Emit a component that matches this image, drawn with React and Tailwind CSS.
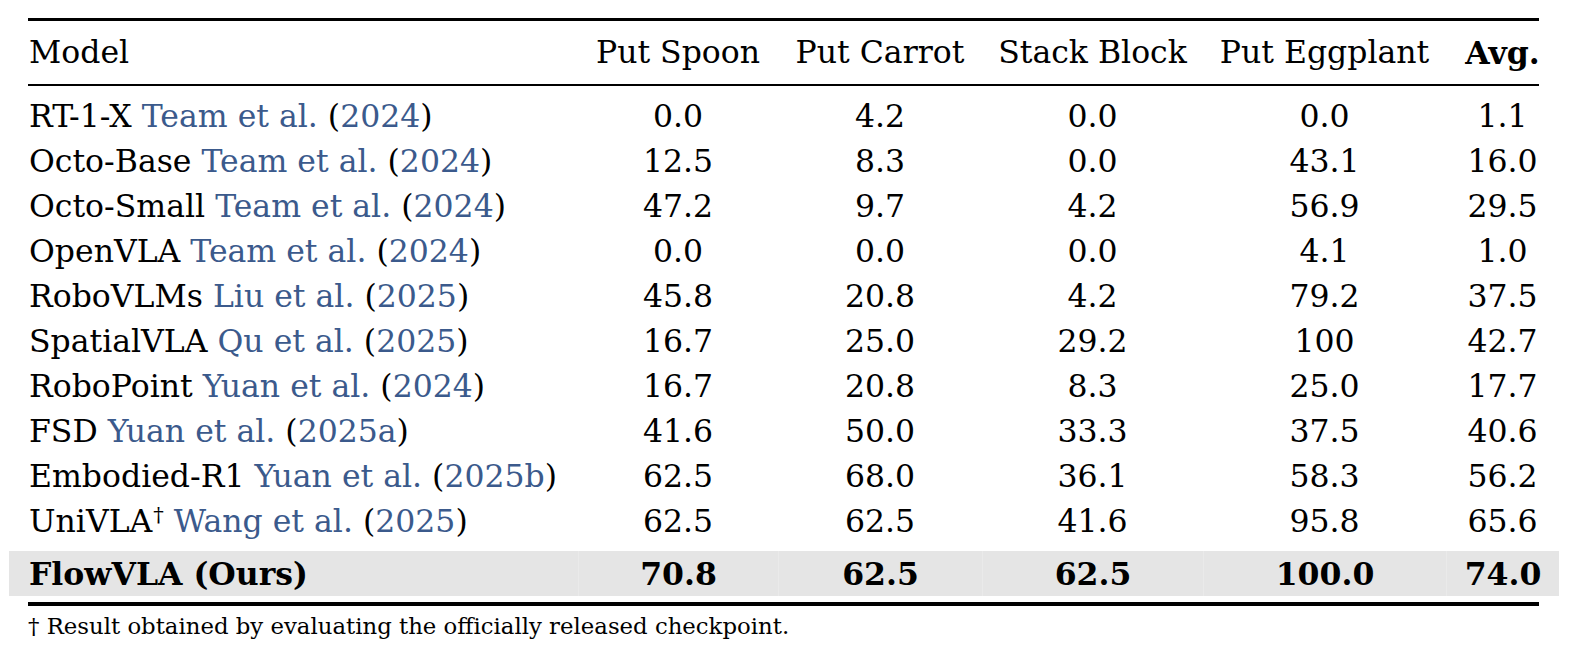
const rows = [
  ["RT-1-X", "Team et al.", "2024", ["0.0", "4.2", "0.0", "0.0", "1.1"]],
  ["Octo-Base", "Team et al.", "2024", ["12.5", "8.3", "0.0", "43.1", "16.0"]],
  ["Octo-Small", "Team et al.", "2024", ["47.2", "9.7", "4.2", "56.9", "29.5"]],
  ["OpenVLA", "Team et al.", "2024", ["0.0", "0.0", "0.0", "4.1", "1.0"]],
  ["RoboVLMs", "Liu et al.", "2025", ["45.8", "20.8", "4.2", "79.2", "37.5"]],
  ["SpatialVLA", "Qu et al.", "2025", ["16.7", "25.0", "29.2", "100", "42.7"]],
  ["RoboPoint", "Yuan et al.", "2024", ["16.7", "20.8", "8.3", "25.0", "17.7"]],
  ["FSD", "Yuan et al.", "2025a", ["41.6", "50.0", "33.3", "37.5", "40.6"]],
  ["Embodied-R1", "Yuan et al.", "2025b", ["62.5", "68.0", "36.1", "58.3", "56.2"]],
  ["UniVLA", "Wang et al.", "2025", ["62.5", "62.5", "41.6", "95.8", "65.6"], true],
];

const grid = "grid grid-cols-[569px_200px_204px_221px_243px_113px]";
const cite = "text-[#3b5a8c]";

export default function App() {
  return (
    <div className="w-[1580px] h-[660px] bg-white text-black font-['DejaVu_Serif',serif] pt-[18px]">
      <div className="ml-[9px] w-[1550px]">
        <div className="ml-[19px] mr-[20px] h-[3px] bg-black" />
        <div className={`${grid} h-[63px] items-center text-[31.5px] leading-[45px]`}>
          <div className="pl-[20px]">Model</div>
          <div className="text-center">Put Spoon</div>
          <div className="text-center">Put Carrot</div>
          <div className="text-center">Stack Block</div>
          <div className="text-center">Put Eggplant</div>
          <div className="text-center font-bold">Avg.</div>
        </div>
        <div className="ml-[19px] mr-[20px] h-[2px] bg-black" />

        <div className="pt-[8px] text-[31.5px] leading-[45px]">
          {rows.map(([name, who, year, vals, dagger]) => (
            <div key={name} className={`${grid} h-[45px]`}>
              <div className="pl-[20px] whitespace-nowrap">
                {name}
                {dagger && <sup className="text-[21px] leading-none ml-[1px]">†</sup>}{" "}
                <span className={cite}>{who}</span> (<span className={cite}>{year}</span>)
              </div>
              {vals.map((v, i) => (
                <div key={i} className="text-center">{v}</div>
              ))}
            </div>
          ))}
        </div>

        <div className={`${grid} h-[45px] mt-[7px] bg-[#e5e5e5] text-[31.5px] leading-[45px] font-bold`}>
          <div className="pl-[20px]">FlowVLA (Ours)</div>
          {["70.8", "62.5", "62.5", "100.0", "74.0"].map((v, i) => (
            <div key={i} className="text-center border-l border-[#eaeaea]">{v}</div>
          ))}
        </div>

        <div className="ml-[19px] mr-[20px] mt-[6px] h-[4px] bg-black" />
        <p className="ml-[19px] mt-[5px] text-[22.8px] leading-[30px]">
          † Result obtained by evaluating the officially released checkpoint.
        </p>
      </div>
    </div>
  );
}
